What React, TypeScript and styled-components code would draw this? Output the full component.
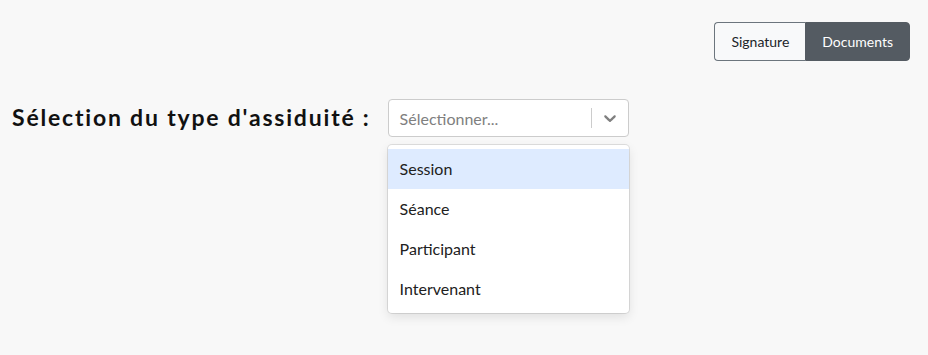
import React from "react";
import styled, { createGlobalStyle } from "styled-components";

const Global = createGlobalStyle`
  html, body { margin: 0; padding: 0; background: #f8f8f8; }
  body { font-family: Lato, "Open Sans", sans-serif; color: #212529; }
`;

const Page = styled.div`
  width: 928px;
  height: 355px;
  box-sizing: border-box;
  padding: 22px 18px 0 12px;
  display: flex;
  flex-direction: column;
`;

const Toolbar = styled.div`
  display: flex;
  justify-content: flex-end;
`;

const ButtonGroup = styled.div`
  display: flex;
`;

const ToggleButton = styled.button<{ $active?: boolean; $first?: boolean }>`
  font-family: Lato, sans-serif;
  font-size: 14px;
  height: 39px;
  padding: 0 16px;
  cursor: pointer;
  border: 1px solid ${(p) => (p.$active ? "#545b62" : "#6c757d")};
  background: ${(p) => (p.$active ? "#545b62" : "#f8f9fa")};
  color: ${(p) => (p.$active ? "#ffffff" : "#212529")};
  border-radius: ${(p) => (p.$first ? "4px 0 0 4px" : "0 4px 4px 0")};
  ${(p) => (p.$first ? "border-right: none;" : "")}
`;

const Row = styled.div`
  display: flex;
  align-items: flex-start;
  margin-top: 38px;
  gap: 17px;
`;

const Label = styled.h2`
  margin: 0;
  font-family: Lato, sans-serif;
  font-weight: 700;
  font-size: 23px;
  letter-spacing: 1.8px;
  line-height: 36px;
  color: #111;
`;

const SelectWrap = styled.div`
  position: relative;
  width: 241px;
`;

const Control = styled.div`
  box-sizing: border-box;
  height: 38px;
  border: 1px solid #cccccc;
  border-radius: 4px;
  background: #fff;
  display: flex;
  align-items: center;
`;

const Placeholder = styled.div`
  flex: 1;
  padding: 0 11px;
  font-size: 16px;
  color: #808080;
`;

const Separator = styled.span`
  width: 1px;
  align-self: stretch;
  margin: 8px 0;
  background: #cccccc;
`;

const Indicator = styled.div`
  width: 36px;
  display: flex;
  align-items: center;
  justify-content: center;
  color: #808080;
`;

const Menu = styled.div`
  position: absolute;
  top: 46px;
  left: 0;
  right: 0;
  background: #fff;
  border-radius: 4px;
  box-shadow: 0 0 0 1px rgba(0, 0, 0, 0.1), 0 4px 11px rgba(0, 0, 0, 0.1);
  padding: 4px 0;
`;

const Option = styled.div<{ $focused?: boolean }>`
  padding: 8px 12px;
  font-size: 16px;
  line-height: 24px;
  color: #212121;
  background: ${(p) => (p.$focused ? "#deebff" : "transparent")};
`;

const options = ["Session", "Séance", "Participant", "Intervenant"];

export default function App() {
  return (
    <>
      <Global />
      <Page>
        <Toolbar>
          <ButtonGroup>
            <ToggleButton $first>Signature</ToggleButton>
            <ToggleButton $active>Documents</ToggleButton>
          </ButtonGroup>
        </Toolbar>
        <Row>
          <Label>Sélection du type d'assiduité :</Label>
          <SelectWrap>
            <Control>
              <Placeholder>Sélectionner...</Placeholder>
              <Separator />
              <Indicator>
                <svg width="20" height="20" viewBox="0 0 20 20" fill="currentColor">
                  <path d="M4.516 7.548c0.436-0.446 1.043-0.481 1.576 0l3.908 3.747 3.908-3.747c0.533-0.481 1.141-0.446 1.574 0 0.436 0.445 0.408 1.197 0 1.615-0.406 0.418-4.695 4.502-4.695 4.502-0.217 0.223-0.502 0.335-0.787 0.335s-0.57-0.112-0.789-0.335c0 0-4.287-4.084-4.695-4.502s-0.436-1.170 0-1.615z" />
                </svg>
              </Indicator>
            </Control>
            <Menu>
              {options.map((o, i) => (
                <Option key={o} $focused={i === 0}>
                  {o}
                </Option>
              ))}
            </Menu>
          </SelectWrap>
        </Row>
      </Page>
    </>
  );
}
